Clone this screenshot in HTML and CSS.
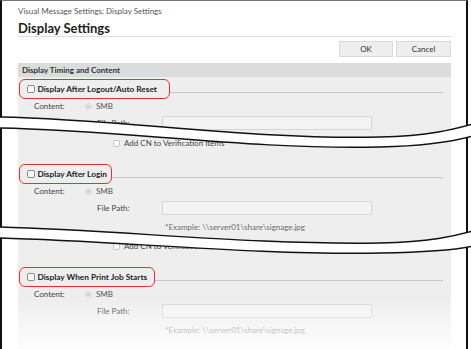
FILE: index.html
```html
<!DOCTYPE html>
<html lang="en">
<head>
    <meta charset="UTF-8">
    <title>Display Settings</title>
    <link rel="stylesheet" href="styles.css">
</head>
<body>
    <div class="page">
        <div class="window">
            <div class="crumb">Visual Message Settings: Display Settings</div>
            <h1 class="title">Display Settings</h1>
            <div class="actions">
                <button class="btn btn-ok">OK</button>
                <button class="btn btn-cancel">Cancel</button>
            </div>

            <div class="panel">
                <div class="panel-head">Display Timing and Content</div>

                <div class="group">
                    <div class="group-head">
                        <span class="mark mark-wide"><span class="check"></span>Display After Logout/Auto Reset</span>
                        <span class="rule"></span>
                    </div>
                    <div class="row row-content"><span class="label">Content:</span><span class="radio"></span><span class="muted">SMB</span></div>
                    <div class="row row-file"><span class="label label-file">File Path:</span><span class="input"></span></div>
                    <div class="row row-cn"><span class="check check-small"></span>Add CN to Verification Items</div>
                </div>

                <div class="group">
                    <div class="group-head">
                        <span class="mark mark-tight"><span class="check"></span>Display After Login</span>
                        <span class="rule"></span>
                    </div>
                    <div class="row row-content"><span class="label">Content:</span><span class="radio"></span><span class="muted">SMB</span></div>
                    <div class="row row-file"><span class="label label-file">File Path:</span><span class="input"></span></div>
                    <div class="row row-example">*Example: \\server01\share\signage.jpg</div>
                    <div class="row row-cn"><span class="check check-small"></span>Add CN to Verification Items</div>
                </div>

                <div class="group">
                    <div class="group-head">
                        <span class="mark"><span class="check"></span>Display When Print Job Starts</span>
                        <span class="rule"></span>
                    </div>
                    <div class="row row-content"><span class="label">Content:</span><span class="radio"></span><span class="muted">SMB</span></div>
                    <div class="row row-file"><span class="label label-file">File Path:</span><span class="input"></span></div>
                    <div class="row row-example">*Example: \\server01\share\signage.jpg</div>
                </div>
            </div>
        </div>

        <!-- torn-page breaks drawn over the screenshot -->
        <svg class="tear" width="471" height="349" viewBox="0 0 471 349">
            <path class="tear-band" d="M-2,117 C120,119 250,140 380,137 C430,136 455,129 473,124 L473,136 C455,141 430,146 380,147 C250,150 120,130 -2,128 Z"/>
            <path class="tear-line" d="M-2,117 C120,119 250,140 380,137 C430,136 455,129 473,124"/>
            <path class="tear-line" d="M-2,128 C120,130 250,150 380,147 C430,146 455,141 473,136"/>

            <path class="tear-band" d="M-2,227 C120,230 250,245 380,243 C430,242 455,236 473,231 L473,246 C455,250 430,252 380,253 C250,255 120,241 -2,238 Z"/>
            <path class="tear-line" d="M-2,227 C120,230 250,245 380,243 C430,242 455,236 473,231"/>
            <path class="tear-line" d="M-2,238 C120,241 250,255 380,253 C430,252 455,250 473,246"/>
        </svg>
        <div class="fade"></div>
    </div>
</body>
</html>
```

FILE: styles.css
```css
* {
    margin: 0;
    padding: 0;
    box-sizing: border-box;
}

body {
    font-family: 'Lato', 'Open Sans', sans-serif;
    background: #fff;
    color: #333;
}

.page {
    position: relative;
    width: 471px;
    height: 349px;
    overflow: hidden;
}

.window {
    width: 468px;
    height: 349px;
    border-left: 2px solid #111;
    border-right: 2px solid #111;
    border-top: 1px solid #777;
    padding: 0 15px 0 16px;
}

.crumb {
    font-size: 8px;
    line-height: 12px;
    padding-top: 4px;
    height: 16px;
    color: #555;
}

.title {
    font-size: 13px;
    font-weight: bold;
    line-height: 16px;
    padding-top: 3px;
    height: 20px;
    border-bottom: 1px solid #ddd;
    color: #222;
}

.actions {
    display: flex;
    justify-content: flex-end;
    gap: 3px;
    padding-top: 4px;
}

.btn {
    height: 16px;
    background: #eee;
    border: 1px solid #d9d9d9;
    font-family: inherit;
    font-size: 8px;
    color: #333;
}

.btn-ok {
    width: 54px;
}

.btn-cancel {
    width: 55px;
}

.panel {
    margin-top: 6px;
    background: #eee;
    height: 300px;
}

.panel-head {
    height: 14px;
    line-height: 14px;
    padding-left: 4px;
    background: #dcdcdc;
    font-size: 8px;
    font-weight: bold;
    color: #333;
}

.group {
    margin-top: 11px;
}

.panel-head + .group {
    margin-top: 2px;
}

.group-head {
    display: flex;
    height: 20px;
}

.mark {
    display: inline-flex;
    align-items: center;
    gap: 3px;
    height: 20px;
    margin-left: 1px;
    padding: 0 7px 1px 6.5px;
    border: 1.5px solid #e5322d;
    border-radius: 6px;
    background: #eee;
    font-size: 8.3px;
    font-weight: bold;
    color: #222;
    white-space: nowrap;
}

.mark-wide {
    padding-right: 12px;
}

.mark-tight {
    padding-right: 4px;
}

.rule {
    flex: 1;
    margin-top: 13px;
    margin-right: 8px;
    border-top: 1px solid #c8c8c8;
    height: 0;
}

.check {
    display: inline-block;
    width: 8px;
    height: 8px;
    border: 1px solid #8a8a8a;
    border-radius: 2px;
    background: #fff;
}

.check-small {
    width: 7px;
    height: 7px;
    border-color: #c4c4c4;
    margin-right: 4px;
}

.row {
    display: flex;
    align-items: center;
    font-size: 8px;
    color: #444;
    white-space: nowrap;
}

.row-content {
    height: 14px;
    padding-left: 16px;
}

.label {
    width: 51px;
}

.label-file {
    width: 65px;
}

.radio {
    width: 7px;
    height: 7px;
    border-radius: 50%;
    border: 1px solid #d4d4d4;
    background: radial-gradient(circle, #cfcfcf 0 1.5px, #f4f4f4 2px);
    margin-right: 4px;
}

.muted {
    color: #555;
}

.row-file {
    height: 20px;
    padding-left: 79px;
}

.input {
    width: 210px;
    height: 14px;
    background: #f3f3f3;
    border: 1px solid #d6d6d6;
}

.row-example {
    height: 18px;
    padding-left: 147px;
    color: #6a6a6a;
}

.row-cn {
    height: 20px;
    padding-left: 95px;
}

.tear {
    position: absolute;
    top: 0;
    left: 0;
}

.tear-band {
    fill: #fff;
}

.tear-line {
    fill: none;
    stroke: #111;
    stroke-width: 1.4;
}

.fade {
    position: absolute;
    left: 2px;
    right: 5px;
    top: 298px;
    bottom: 0;
    background: linear-gradient(to bottom, rgba(255, 255, 255, 0), rgba(255, 255, 255, 0.92));
}
```
